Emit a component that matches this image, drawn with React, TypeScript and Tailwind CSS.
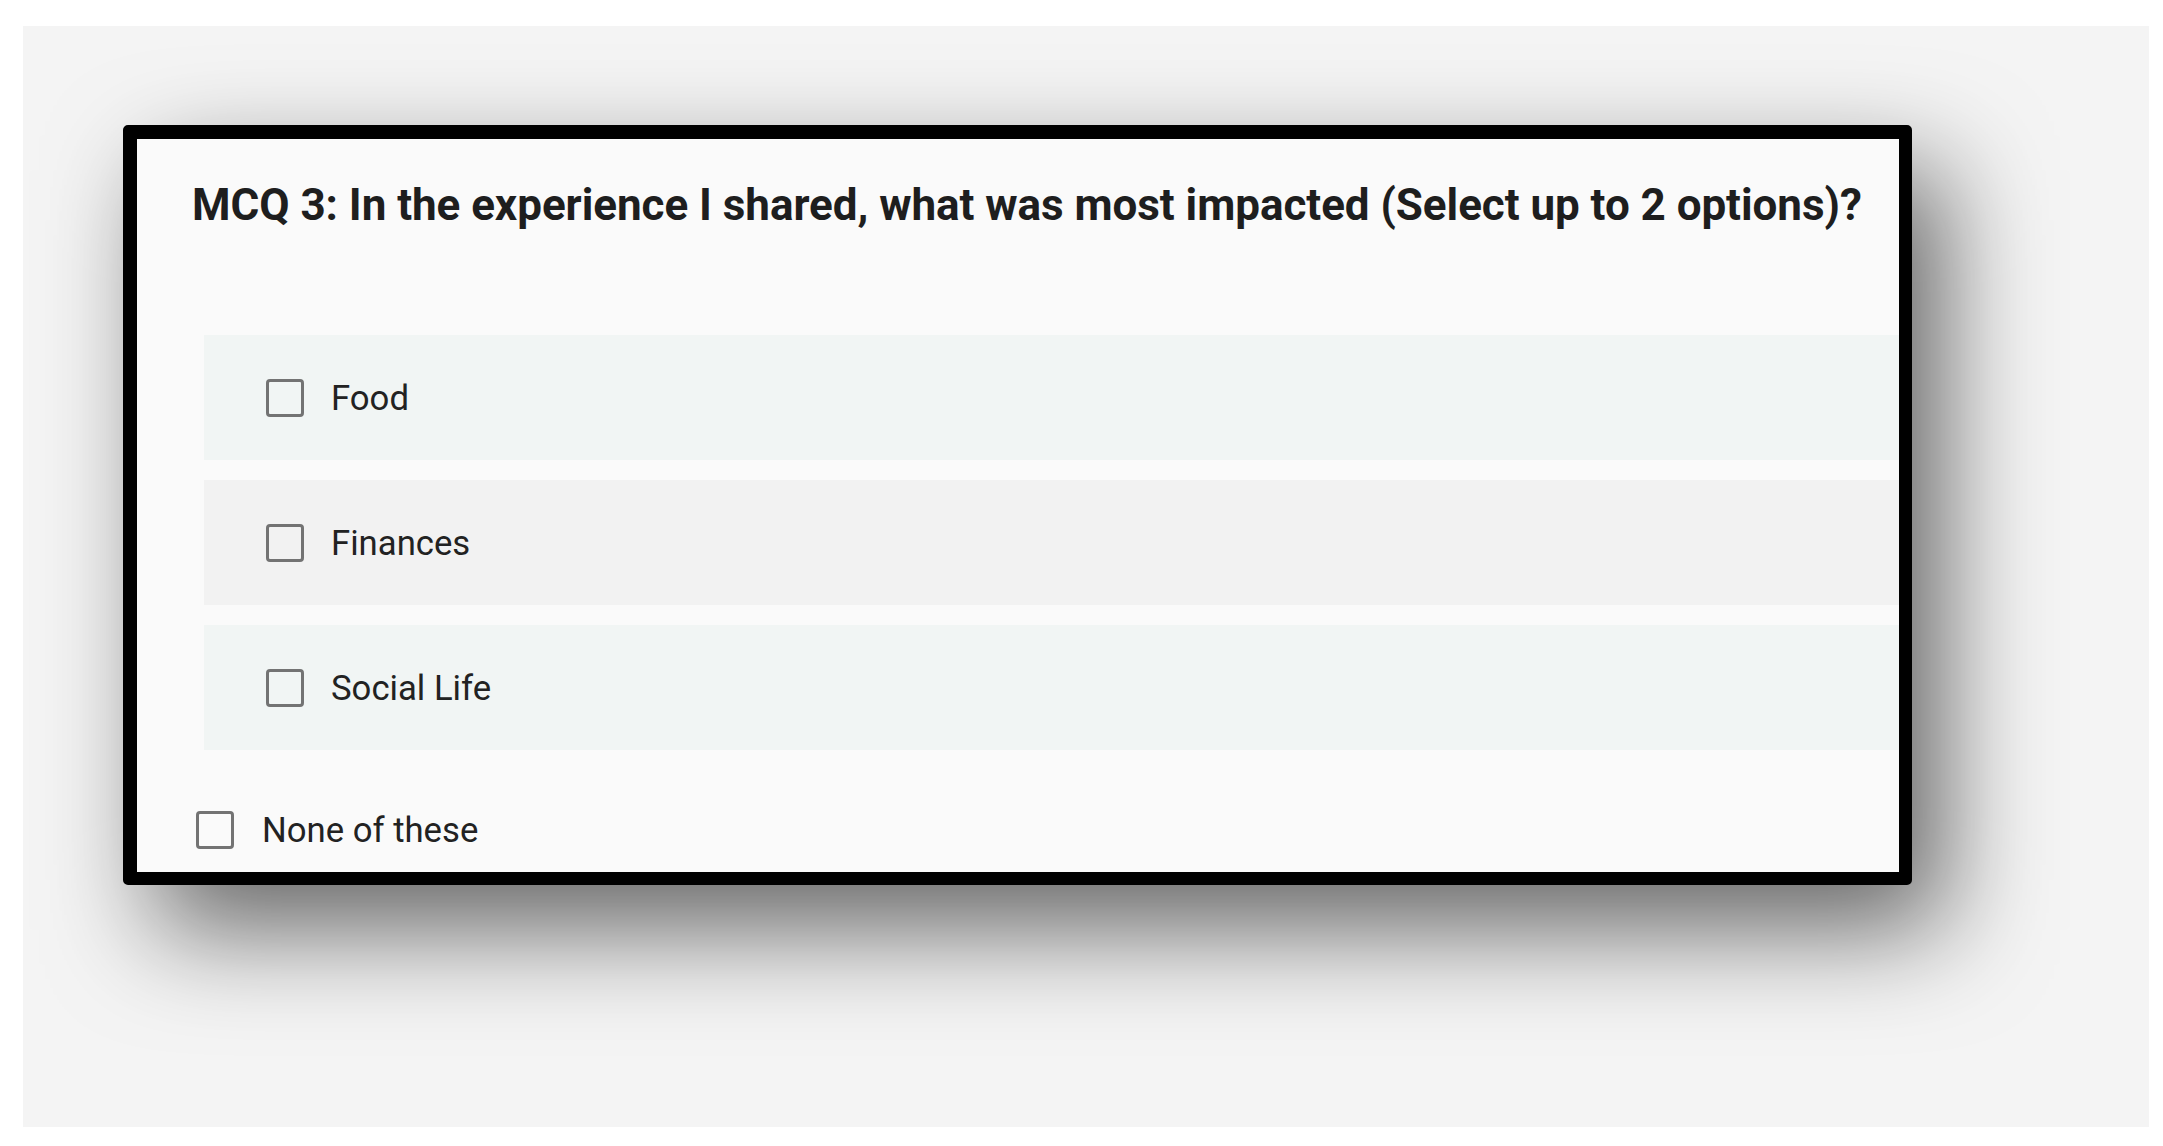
import React from "react";

const Box = () => (
  <div className="w-[38px] h-[38px] shrink-0 rounded-[4px] border-[3px] border-[#737373]" />
);

const Row = ({ label, bg }: { label: string; bg: string }) => (
  <div className={`h-[125px] flex items-center pl-[62px] gap-[27px] ${bg}`}>
    <Box />
    <span className="text-[34.7px] leading-[40px] text-[#222222]">{label}</span>
  </div>
);

export default function App() {
  return (
    <div
      className="w-[2163px] h-[1146px] bg-white pt-[26px] pl-[23px] overflow-hidden"
      style={{ fontFamily: "Roboto, 'Liberation Sans', sans-serif" }}
    >
      <div className="w-[2126px] h-[1101px] bg-[#f4f4f4] pt-[99px] pl-[100px]">
        <div className="w-[1789px] h-[760px] border-[13px] border-t-[14px] border-l-[14px] border-black rounded-[5px] bg-[#fafafa] overflow-hidden shadow-[32px_45px_105px_rgba(0,0,0,0.58)] flex flex-col">
          <h1 className="pt-[40px] pl-[55px] text-[44px] leading-[52px] font-bold tracking-[-0.05px] text-[#1e1e1e] whitespace-nowrap">
            MCQ 3: In the experience I shared, what was most impacted (Select up to 2 options)?
          </h1>
          <div className="mt-[104px] ml-[67px] flex flex-col gap-[20px]">
            <Row label="Food" bg="bg-[#f1f5f4]" />
            <Row label="Finances" bg="bg-[#f2f2f2]" />
            <Row label="Social Life" bg="bg-[#f1f5f4]" />
          </div>
          <div className="mt-[61px] pl-[59px] flex items-center gap-[28px]">
            <Box />
            <span className="text-[34.7px] leading-[38px] text-[#222222]">None of these</span>
          </div>
        </div>
      </div>
    </div>
  );
}
